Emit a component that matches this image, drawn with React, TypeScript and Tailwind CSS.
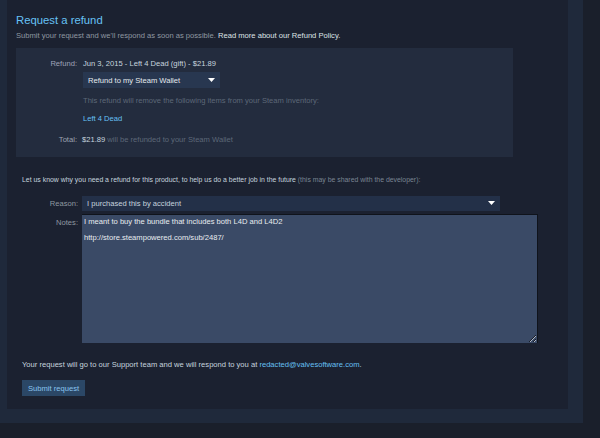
export default function App() {
  return (
    <div className="w-[600px] h-[438px] bg-[#1a1f2b] overflow-hidden font-['Liberation_Sans',Arial,sans-serif] text-[7.6px] leading-none">
      <div className="w-[583px] h-[423px] bg-[#1f293b] pl-[7px] pr-[15px] pb-[14px]">
        <div className="h-full bg-[#1b2130] pl-[9px] pt-[15px]">
          <h1 className="text-[11.3px] text-[#67c1f5]">Request a refund</h1>
          <p className="mt-[6px] text-[#8f98a0]">
            Submit your request and we'll respond as soon as possible.{" "}
            <span className="text-[#dfe3e6]">Read more about our Refund Policy.</span>
          </p>

          <div className="mt-[8px] w-[497px] h-[109px] bg-[#232c3e] pt-[12px]">
            <div className="flex">
              <div className="w-[61px] text-right text-[#9ea3b8]">Refund:</div>
              <div className="ml-[6px] flex flex-col">
                <div className="text-[#c6d4df]">Jun 3, 2015 - Left 4 Dead (gift) - $21.89</div>
                <div className="mt-[5px] w-[137px] h-[16px] bg-[#283750] flex items-center justify-between px-[5px] text-[#e6eaee]">
                  <span>Refund to my Steam Wallet</span>
                  <Caret />
                </div>
                <div className="mt-[9px] text-[#5d6878]">This refund will remove the following items from your Steam inventory:</div>
                <div className="mt-[10px] text-[#66c0f4]">Left 4 Dead</div>
              </div>
            </div>
            <div className="flex mt-[13px]">
              <div className="w-[61px] text-right text-[#9ea3b0]">Total:</div>
              <div className="ml-[5px]">
                <span className="text-[#c6d4df]">$21.89</span>
                <span className="text-[#5d6878]"> will be refunded to your Steam Wallet</span>
              </div>
            </div>
          </div>

          <p className="mt-[20px] ml-[6px] text-[6.9px] text-[#c6d4df]">
            Let us know why you need a refund for this product, to help us do a better job in the future{" "}
            <span className="text-[#7a8592]">(this may be shared with the developer):</span>
          </p>

          <div className="mt-[12px] flex items-center">
            <div className="w-[62px] text-right text-[#8f98a0]">Reason:</div>
            <div className="ml-[4px] w-[418px] h-[15px] bg-[#233048] flex items-center justify-between px-[5px] text-[#c6d4df]">
              <span>I purchased this by accident</span>
              <Caret />
            </div>
          </div>

          <div className="mt-[3px] flex">
            <div className="w-[62px] text-right text-[#8f98a0] pt-[5px]">Notes:</div>
            <textarea
              spellCheck={false}
              className="ml-[4px] w-[456px] h-[129px] bg-[#3a4a66] border-t border-r border-[#0f131b] text-[#e8ecf0] px-[2px] pt-[3px] leading-[8px] outline-none"
              defaultValue={"I meant to buy the bundle that includes both L4D and L4D2\n\nhttp://store.steampowered.com/sub/2487/"}
            />
          </div>

          <p className="mt-[18px] ml-[6px] text-[#c6d4df]">
            Your request will go to our Support team and we will respond to you at{" "}
            <span className="text-[#66c0f4]">redacted@valvesoftware.com</span>.
          </p>

          <button className="mt-[12px] ml-[6px] h-[16px] px-[6px] bg-[#2b4766] text-[#8ac4ef]">Submit request</button>
        </div>
      </div>
    </div>
  );
}

function Caret() {
  return (
    <svg width="7" height="4" viewBox="0 0 7 4">
      <path d="M0 0 L7 0 L3.5 4 Z" fill="#ffffff" />
    </svg>
  );
}
